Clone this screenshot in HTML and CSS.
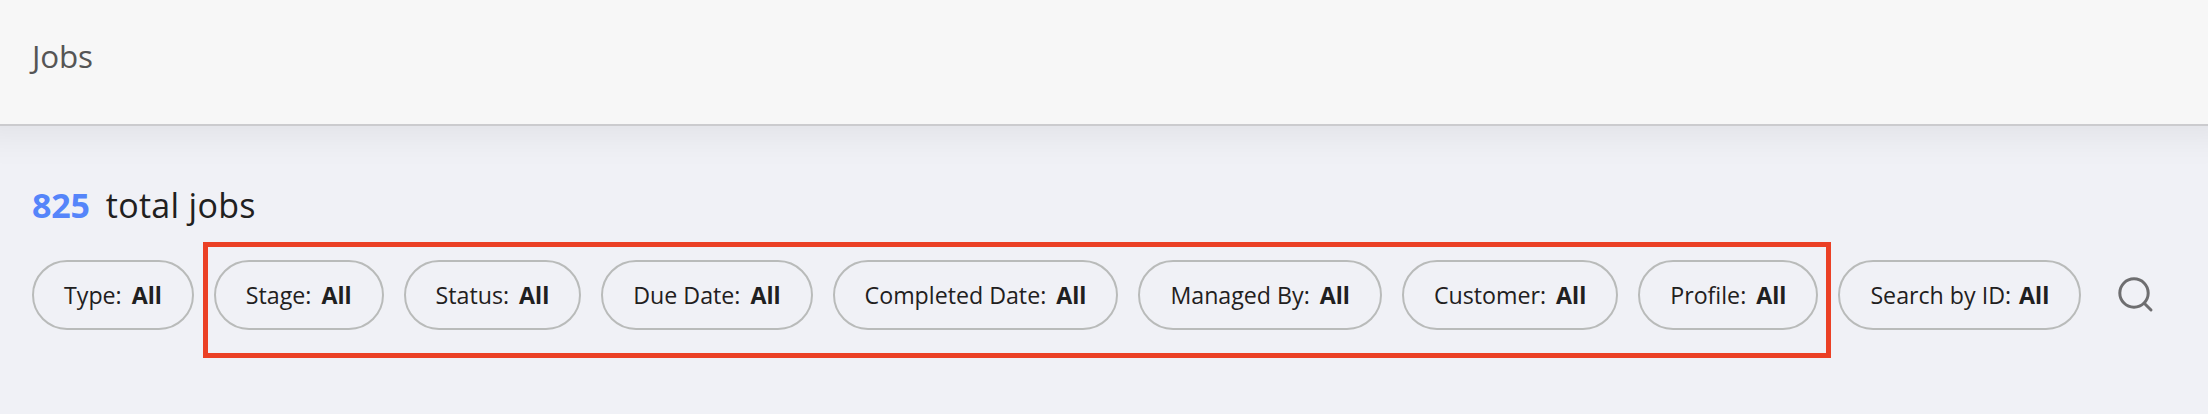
FILE: index.html
```html
<!DOCTYPE html>
<html lang="en">
<head>
<meta charset="utf-8">
<title>Jobs</title>
<link rel="stylesheet" href="styles.css">
</head>
<body>
<header class="header"><h1 class="title">Jobs</h1></header>
<main class="main">
<p class="summary"><span class="count">825</span><span class="total">total jobs</span></p>
<div class="filters">
<button class="pill"><span>Type:</span><b>All</b></button>
<div class="group">
<button class="pill"><span>Stage:</span><b>All</b></button>
<button class="pill"><span>Status:</span><b>All</b></button>
<button class="pill"><span>Due Date:</span><b>All</b></button>
<button class="pill"><span>Completed Date:</span><b>All</b></button>
<button class="pill"><span>Managed By:</span><b>All</b></button>
<button class="pill"><span>Customer:</span><b>All</b></button>
<button class="pill"><span>Profile:</span><b>All</b></button>
<div class="highlight"></div>
</div>
<button class="pill pill-search"><span>Search by ID:</span><b>All</b></button>
<svg class="search" viewBox="0 0 36 36" fill="none" stroke="#6e6e70" stroke-width="3" stroke-linecap="round"><circle cx="16" cy="16" r="14.2"/><path d="M26.5 26.5L33 33"/></svg>
</div>
</main>
</body>
</html>
```

FILE: styles.css
```css
* { box-sizing: border-box; }
body {
  margin: 0;
  height: 414px;
  overflow: hidden;
  background: #f0f1f6;
  color: #1f2020;
  font-family: "Open Sans", sans-serif;
}
.header {
  height: 126px;
  margin: 0 -30px;
  padding: 34px 62px 0;
  background: #f7f7f7;
  border-bottom: 2px solid #cbcbce;
  box-shadow: 0 8px 36px rgba(0, 0, 0, 0.07);
}
.title {
  margin: 0;
  color: #555;
  font-size: 31.4px;
  font-weight: 400;
  line-height: 44px;
  letter-spacing: -0.2px;
}
.main { padding: 55px 32px 0; }
.summary {
  display: flex;
  gap: 16px;
  margin: 0;
  height: 79px;
  font-size: 34px;
  line-height: 48px;
}
.count { color: #5585fa; font-weight: 700; letter-spacing: -0.2px; }
.total { font-weight: 500; letter-spacing: 0.3px; }
.filters, .group { display: flex; align-items: center; gap: 20px; }
.group { position: relative; }
.highlight {
  position: absolute;
  inset: -18px -13px -28px -11px;
  border: 5px solid #eb4025;
  pointer-events: none;
}
.pill {
  display: flex;
  flex: none;
  align-items: center;
  gap: 10px;
  height: 70px;
  padding: 0 30px 1px;
  border: 2px solid #b9bbba;
  border-radius: 35px;
  background: none;
  color: inherit;
  font: 400 23.2px/34px "Open Sans", sans-serif;
  white-space: nowrap;
}
.pill-search { gap: 8px; }
.search { flex: none; width: 36px; height: 36px; margin-left: 17px; }
```
